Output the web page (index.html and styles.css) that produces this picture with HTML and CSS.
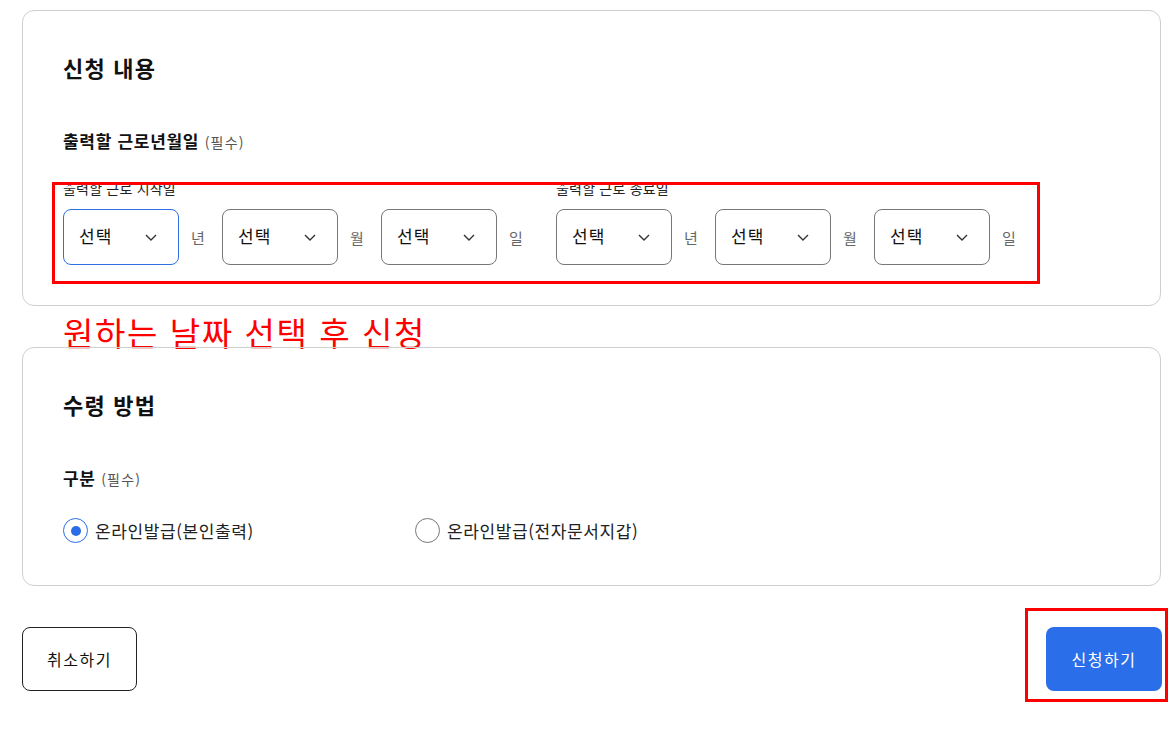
FILE: index.html
```html
<!DOCTYPE html>
<html lang="ko">
<head>
  <meta charset="UTF-8" />
  <meta name="viewport" content="width=device-width, initial-scale=1.0"/>
  <title>신청 내용</title>
  <link rel="stylesheet" href="styles.css">
</head>
<body>

  <div class="page">

    <section class="card">
      <h2 class="card-title">신청 내용</h2>
      <div class="field-label">출력할 근로년월일 <span class="req">(필수)</span></div>

      <div class="date-row">
        <div class="date-group">
          <div class="sub-label">출력할 근로 시작일</div>
          <div class="date-selects">
            <div class="date-part">
              <button class="select-box focused"><span>선택</span>
                <svg width="12" height="7" viewBox="0 0 12 7"><path d="M1 1l5 5 5-5" fill="none" stroke="#333" stroke-width="1.4"/></svg>
              </button>
              <span class="unit">년</span>
            </div>
            <div class="date-part">
              <button class="select-box"><span>선택</span>
                <svg width="12" height="7" viewBox="0 0 12 7"><path d="M1 1l5 5 5-5" fill="none" stroke="#333" stroke-width="1.4"/></svg>
              </button>
              <span class="unit">월</span>
            </div>
            <div class="date-part">
              <button class="select-box"><span>선택</span>
                <svg width="12" height="7" viewBox="0 0 12 7"><path d="M1 1l5 5 5-5" fill="none" stroke="#333" stroke-width="1.4"/></svg>
              </button>
              <span class="unit">일</span>
            </div>
          </div>
        </div>

        <div class="date-group">
          <div class="sub-label">출력할 근로 종료일</div>
          <div class="date-selects">
            <div class="date-part">
              <button class="select-box"><span>선택</span>
                <svg width="12" height="7" viewBox="0 0 12 7"><path d="M1 1l5 5 5-5" fill="none" stroke="#333" stroke-width="1.4"/></svg>
              </button>
              <span class="unit">년</span>
            </div>
            <div class="date-part">
              <button class="select-box"><span>선택</span>
                <svg width="12" height="7" viewBox="0 0 12 7"><path d="M1 1l5 5 5-5" fill="none" stroke="#333" stroke-width="1.4"/></svg>
              </button>
              <span class="unit">월</span>
            </div>
            <div class="date-part">
              <button class="select-box"><span>선택</span>
                <svg width="12" height="7" viewBox="0 0 12 7"><path d="M1 1l5 5 5-5" fill="none" stroke="#333" stroke-width="1.4"/></svg>
              </button>
              <span class="unit">일</span>
            </div>
          </div>
        </div>
      </div>

      <!-- annotation box -->
      <div class="mark mark-dates"></div>
    </section>

    <div class="note">원하는 날짜 선택 후 신청</div>

    <section class="card card-receive">
      <h2 class="card-title">수령 방법</h2>
      <div class="field-label">구분 <span class="req">(필수)</span></div>

      <div class="radio-row">
        <label class="radio-item">
          <span class="radio checked"></span>
          <span>온라인발급(본인출력)</span>
        </label>
        <label class="radio-item">
          <span class="radio"></span>
          <span>온라인발급(전자문서지갑)</span>
        </label>
      </div>
    </section>

    <div class="actions">
      <button class="btn btn-cancel">취소하기</button>
      <!-- annotation box around apply -->
      <div class="apply-mark">
        <button class="btn btn-apply">신청하기</button>
      </div>
    </div>

  </div>

</body>
</html>
```

FILE: styles.css
```css
* {
  margin: 0;
  padding: 0;
  box-sizing: border-box;
  font-family: "Noto Sans CJK KR", "Noto Sans", sans-serif;
}

body {
  background-color: #fff;
  color: #111;
}

.page {
  width: 1140px;
  margin-left: 22px;
  padding-top: 10px;
  padding-bottom: 20px;
}

.card {
  position: relative;
  border: 1px solid #cfcfcf;
  border-radius: 12px;
  padding: 40px 40px 40px;
  width: 1139px;
}

.card-title {
  font-size: 22px;
  line-height: 32px;
  font-weight: bold;
  letter-spacing: 1.2px;
  color: #111;
  margin-bottom: 46px;
}

.field-label {
  font-size: 17px;
  line-height: 24px;
  font-weight: bold;
  letter-spacing: 0.7px;
  color: #111;
}

.field-label .req {
  font-size: 14px;
  font-weight: normal;
  letter-spacing: 1.2px;
  color: #555;
}

.date-row {
  display: flex;
  gap: 33px;
  margin-top: 25px;
}

.sub-label {
  font-size: 14px;
  line-height: 18px;
  letter-spacing: 0.2px;
  color: #222;
  margin-bottom: 12px;
}

.date-selects {
  display: flex;
  gap: 17px;
}

.date-part {
  display: flex;
  align-items: center;
  gap: 12px;
}

.select-box {
  width: 116px;
  height: 56px;
  display: flex;
  align-items: center;
  justify-content: space-between;
  padding: 0 21px 3px 15px;
  border: 1px solid #777;
  border-radius: 8px;
  background-color: #fff;
  font-size: 17px;
  letter-spacing: 1px;
  color: #111;
  cursor: pointer;
}

.select-box svg {
  margin-top: 3px;
}

.select-box.focused {
  border-color: #2f6fe4;
}

.unit {
  width: 14px;
  font-size: 15px;
  color: #666;
}

.mark {
  position: absolute;
  border: 3px solid #f00;
  pointer-events: none;
}

.mark-dates {
  left: 29px;
  top: 171px;
  width: 988px;
  height: 102px;
}

.note {
  height: 41px;
  padding-top: 10px;
  padding-left: 41px;
  font-size: 33px;
  line-height: 33px;
  letter-spacing: 1.6px;
  color: #f00;
  white-space: nowrap;
}

.card-receive {
  padding-bottom: 42px;
}

.radio-row {
  display: flex;
  margin-top: 27px;
}

.radio-item {
  width: 352px;
  display: flex;
  align-items: center;
  gap: 7px;
  font-size: 17px;
  line-height: 25px;
  letter-spacing: 0.6px;
  color: #222;
  cursor: pointer;
}

.radio {
  width: 25px;
  height: 25px;
  border-radius: 50%;
  border: 1.5px solid #777;
  display: flex;
  align-items: center;
  justify-content: center;
}

.radio.checked {
  border-color: #2a6de8;
}

.radio.checked::after {
  content: "";
  width: 10px;
  height: 10px;
  border-radius: 50%;
  background-color: #2a6de8;
}

.actions {
  display: flex;
  justify-content: space-between;
  align-items: flex-start;
  margin-top: 22px;
}

.btn {
  height: 64px;
  border-radius: 8px;
  font-size: 16px;
  letter-spacing: 1.5px;
  cursor: pointer;
}

.btn-cancel {
  width: 115px;
  margin-top: 19px;
  border: 1px solid #222;
  background-color: #fff;
  color: #111;
}

.apply-mark {
  display: flex;
  border: 3px solid #f00;
  padding: 16px 3px 8px 18px;
  margin-right: -6px;
}

.btn-apply {
  width: 116px;
  border: none;
  background-color: #2a6fe9;
  color: #fff;
}
```
